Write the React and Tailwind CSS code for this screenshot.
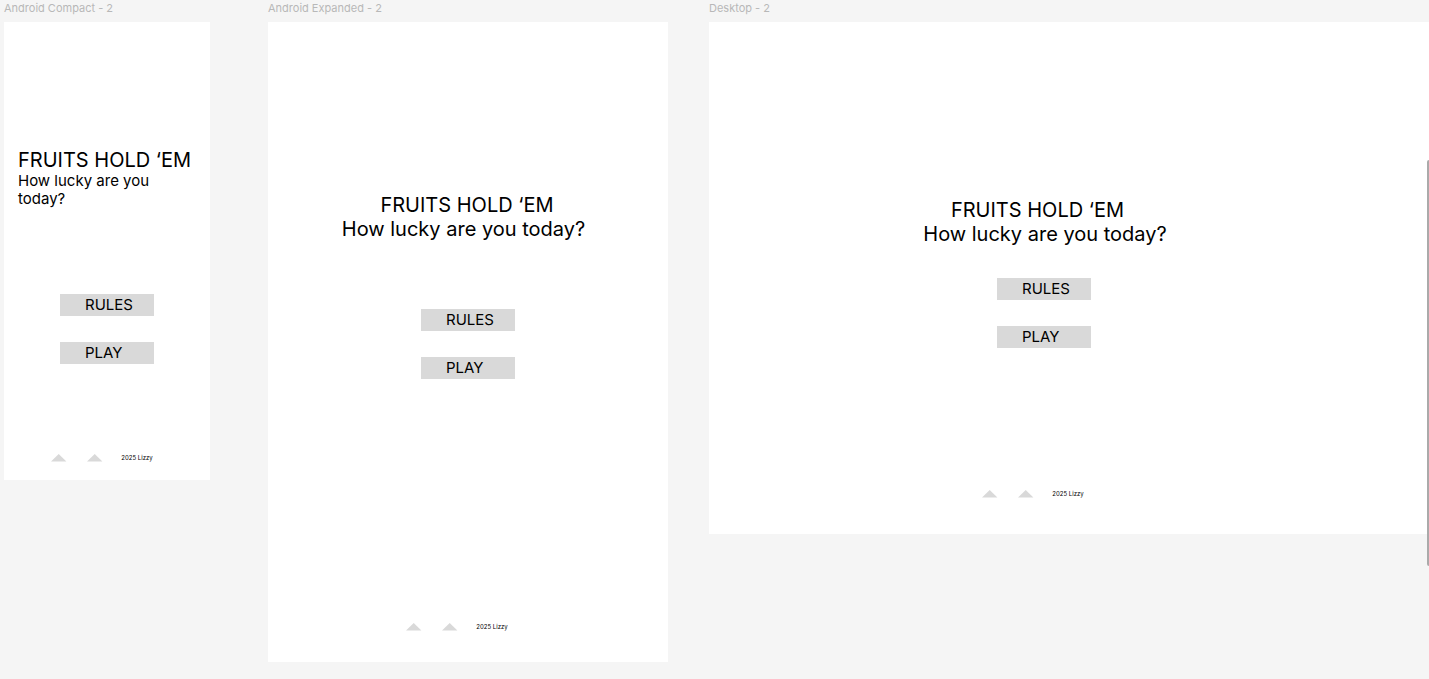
import React from "react";

function Triangle() {
  return (
    <svg viewBox="0 0 16 8" className="h-2 w-4 shrink-0" aria-hidden="true">
      <path d="M7.7 0 L15.4 7.6 H0 Z" fill="#d9d9d9" />
    </svg>
  );
}

function MenuButton({ children }) {
  return (
    <button
      type="button"
      className="h-[22px] w-[94px] bg-[#d9d9d9] pl-[25px] text-left text-[15px] leading-[22px]"
    >
      {children}
    </button>
  );
}

function Menu({ className }) {
  return (
    <nav className={`flex flex-col items-center gap-[26px] ${className}`}>
      <MenuButton>RULES</MenuButton>
      <MenuButton>PLAY</MenuButton>
    </nav>
  );
}

function Footer({ className }) {
  return (
    <footer className={`flex items-center justify-center ${className}`}>
      <div className="flex gap-5">
        <Triangle />
        <Triangle />
      </div>
      <span className="ml-[18px] text-[6px] leading-2 whitespace-nowrap">2025 Lizzy</span>
    </footer>
  );
}

function Frame({ label, className, children }) {
  return (
    <section className={`min-w-0 ${className}`}>
      <h2 className="h-[22px] text-[11px] leading-4 whitespace-nowrap text-[#b8b8b8]">{label}</h2>
      <div className="bg-white">{children}</div>
    </section>
  );
}

export default function App() {
  return (
    <main className="relative min-h-screen overflow-hidden bg-[#f5f5f5] pl-1 font-['Inter',sans-serif] text-black [font-optical-sizing:none]">
      <div className="flex items-start">
        <Frame label="Android Compact - 2" className="flex-[206]">
          <div className="px-[14px] pt-[127px]">
            <h1 className="text-[20px] leading-[23px] whitespace-nowrap">FRUITS HOLD ‘EM</h1>
            <p className="max-w-40 text-[15px] leading-[18px]">How lucky are you today?</p>
          </div>
          <Menu className="pt-[86px]" />
          <Footer className="pt-[90px] pr-[10px] pb-[18px]" />
        </Frame>
        <Frame label="Android Expanded - 2" className="ml-[58px] flex-[400]">
          <div className="pt-[171px] text-center text-[20px] leading-6">
            <h1 className="pr-[2px]">FRUITS HOLD ‘EM</h1>
            <p className="pr-[9px]">How lucky are you today?</p>
          </div>
          <Menu className="pt-[68px]" />
          <Footer className="pt-[244px] pr-[22px] pb-[31px]" />
        </Frame>
        <Frame label="Desktop - 2" className="ml-[41px] flex-[720]">
          <div className="pt-[176px] text-center text-[20px] leading-6">
            <h1 className="pr-[63px]">FRUITS HOLD ‘EM</h1>
            <p className="pr-[48px]">How lucky are you today?</p>
          </div>
          <Menu className="pt-[32px] pr-[50px]" />
          <Footer className="pt-[142px] pr-[72px] pb-[36px]" />
        </Frame>
      </div>
      <div className="absolute top-[160px] right-0 h-[406px] w-[2px] rounded-l-full bg-[#aaaaaa]" />
    </main>
  );
}
